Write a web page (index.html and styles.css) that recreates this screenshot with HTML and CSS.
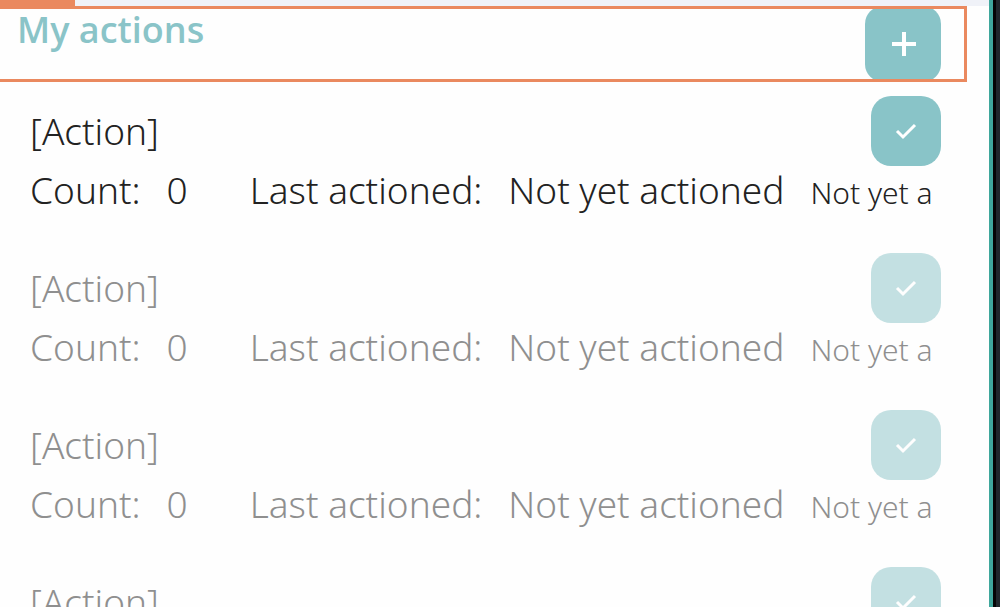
FILE: index.html
```html
<!DOCTYPE html>
<html lang="en">
<head>
    <meta charset="UTF-8">
    <meta name="viewport" content="width=device-width, initial-scale=1.0">
    <title>My actions</title>
    <link rel="stylesheet" href="styles.css">
</head>
<body>
    <main class="panel">
        <div class="tab-strip"><div class="tab-label"></div></div>
        <header class="panel-header">
            <h1>My actions</h1>
            <button type="button" class="add-button" aria-label="Add action">
                <svg width="26" height="26" viewBox="0 0 26 26"><path d="M14 1v24M2 13h24"/></svg>
            </button>
        </header>
        <ul class="action-list">
            <li class="action">
                <div class="action-top">
                    <span>[Action]</span>
                    <button type="button" class="check-button" aria-label="Mark as done">
                        <svg width="22" height="18" viewBox="0 0 22 18"><path d="M2 9l6 6L20 3"/></svg>
                    </button>
                </div>
                <div class="action-details">
                    <span class="count-label">Count:</span>
                    <span class="count">0</span>
                    <span class="last-label">Last actioned:</span>
                    <span class="last">Not yet actioned</span>
                    <span class="status">Not yet a</span>
                </div>
            </li>
            <li class="action faded">
                <div class="action-top">
                    <span>[Action]</span>
                    <button type="button" class="check-button" aria-label="Mark as done">
                        <svg width="22" height="18" viewBox="0 0 22 18"><path d="M2 9l6 6L20 3"/></svg>
                    </button>
                </div>
                <div class="action-details">
                    <span class="count-label">Count:</span>
                    <span class="count">0</span>
                    <span class="last-label">Last actioned:</span>
                    <span class="last">Not yet actioned</span>
                    <span class="status">Not yet a</span>
                </div>
            </li>
            <li class="action faded">
                <div class="action-top">
                    <span>[Action]</span>
                    <button type="button" class="check-button" aria-label="Mark as done">
                        <svg width="22" height="18" viewBox="0 0 22 18"><path d="M2 9l6 6L20 3"/></svg>
                    </button>
                </div>
                <div class="action-details">
                    <span class="count-label">Count:</span>
                    <span class="count">0</span>
                    <span class="last-label">Last actioned:</span>
                    <span class="last">Not yet actioned</span>
                    <span class="status">Not yet a</span>
                </div>
            </li>
            <li class="action faded">
                <div class="action-top">
                    <span>[Action]</span>
                    <button type="button" class="check-button" aria-label="Mark as done">
                        <svg width="22" height="18" viewBox="0 0 22 18"><path d="M2 9l6 6L20 3"/></svg>
                    </button>
                </div>
            </li>
        </ul>
    </main>
    <div class="frame-edge"></div>
</body>
</html>
```
FILE: styles.css
```css
* {
    box-sizing: border-box;
}
body {
    margin: 0;
    height: 100vh;
    overflow: hidden;
    display: flex;
    background-color: #fefefe;
    color: #222;
    font-family: "Noto Sans", "Open Sans", sans-serif;
    font-size: 37px;
    font-weight: 300;
}
.panel {
    flex: 1;
    min-width: 0;
}
.frame-edge {
    width: 11px;
    background-color: #20262b;
    border-left: 4px solid #3fa79c;
    box-shadow: inset 3px 0 #050505;
}
.tab-strip {
    height: 6px;
    background-color: #f0f2f8;
}
.tab-label {
    width: 75px;
    height: 6px;
    background-color: #ea895f;
}
/* outline is drawn over the add button */
.panel-header {
    display: flex;
    justify-content: space-between;
    align-items: flex-start;
    height: 76px;
    margin: 0 22px 0 -4px;
    padding: 0 26px 0 21px;
    outline: 3px solid #ea895f;
    outline-offset: -3px;
}
h1 {
    margin: 0;
    color: #8ac4c8;
    font-family: "Open Sans", sans-serif;
    font-size: 36px;
    font-weight: 600;
    line-height: 48px;
}
button {
    display: flex;
    align-items: center;
    justify-content: center;
    padding: 0;
    border: none;
    background-color: #89c4c8;
    cursor: pointer;
}
button svg {
    fill: none;
    stroke: #fff;
    stroke-width: 3;
}
.add-button {
    width: 76px;
    height: 76px;
    border-radius: 18px;
}
.add-button svg {
    stroke-width: 4;
}
.check-button {
    width: 70px;
    height: 70px;
    border-radius: 20px;
}
.action-list {
    margin: 0;
    padding: 14px 48px 0 30px;
    list-style: none;
}
.action {
    height: 157px;
}
.faded {
    opacity: 0.5;
}
.action-top {
    display: flex;
    align-items: center;
    justify-content: space-between;
    line-height: 48px;
}
.action-details {
    display: flex;
    align-items: baseline;
    line-height: 48px;
    white-space: nowrap;
}
.count-label,
.last-label,
.last {
    margin-right: 26px;
}
.count {
    margin-right: 62px;
}
.status {
    font-size: 30px;
}
```
